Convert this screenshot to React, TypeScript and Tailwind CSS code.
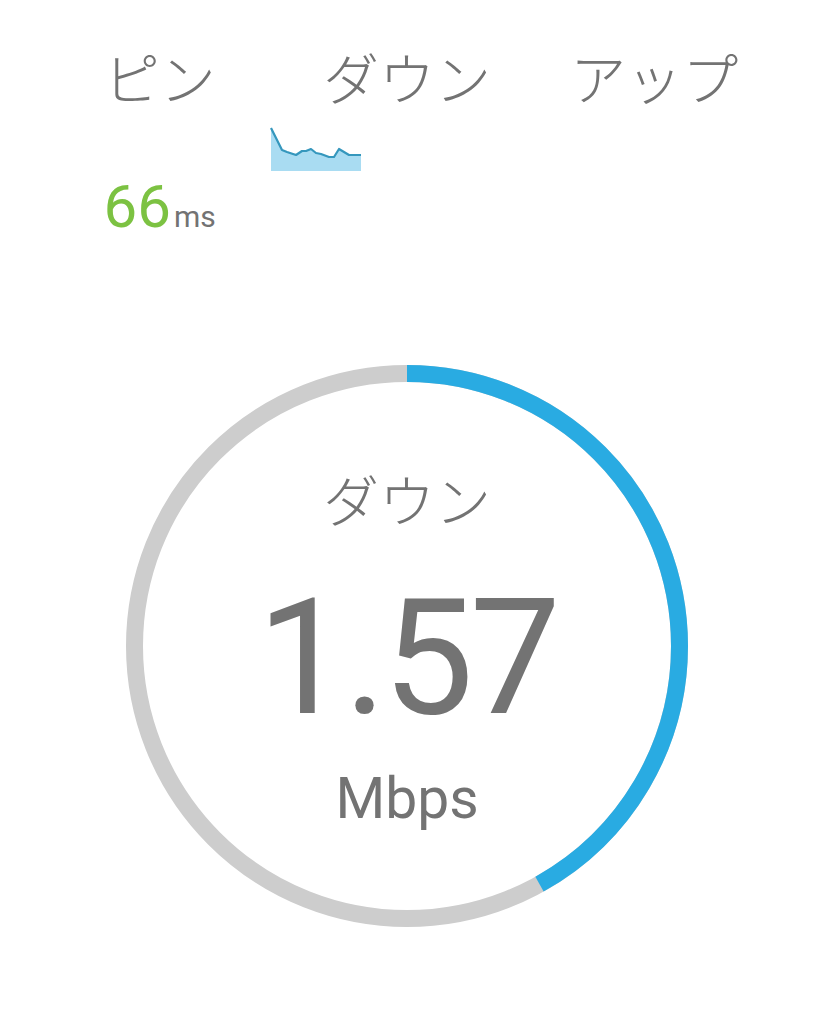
import React from 'react';

const latin = { fontFamily: 'Roboto, "Noto Sans CJK JP", sans-serif' };
const jp = { fontFamily: '"Noto Sans CJK JP", "Noto Sans", sans-serif' };

const sparkPoints = [
  [1, 3], [6, 13], [12, 25], [17, 27], [26, 30], [32, 26], [36, 26], [41, 24],
  [46, 28], [51, 29], [59, 32], [64, 32], [69, 24], [74, 27], [79, 30], [91, 30],
];

const Sparkline: React.FC = () => {
  const line = sparkPoints.map(([x, y], i) => `${i === 0 ? 'M' : 'L'}${x} ${y}`).join(' ');
  const area = `${line} L91 46 L1 46 Z`;
  return (
    <svg width="92" height="47" viewBox="0 0 92 47" className="block">
      <path d={area} fill="#a9dcf2" />
      <path d={line} fill="none" stroke="#3597bd" strokeWidth="2.2" strokeLinejoin="round" />
    </svg>
  );
};

const Gauge: React.FC<{ progress: number }> = ({ progress }) => {
  const r = 272.5;
  const c = 2 * Math.PI * r;
  return (
    <svg width="564" height="564" viewBox="0 0 564 564" className="block">
      <circle cx="282" cy="282" r={r} fill="none" stroke="#cdcdcd" strokeWidth="17" />
      <circle
        cx="282"
        cy="282"
        r={r}
        fill="none"
        stroke="#29abe2"
        strokeWidth="17"
        strokeDasharray={`${c * progress} ${c}`}
        transform="rotate(-90 282 282)"
      />
    </svg>
  );
};

export default function App() {
  return (
    <div className="w-[814px] h-[1024px] bg-white text-[#737373] overflow-hidden">
      {/* header: ping / down / up */}
      <div className="grid grid-cols-3 px-[36px] pt-[38px]">
        <div className="text-center text-[56px] font-light leading-[76px]" style={jp}>ピン</div>
        <div className="text-center text-[56px] font-light leading-[76px]" style={jp}>ダウン</div>
        <div className="text-center text-[56px] font-light leading-[76px]" style={jp}>アップ</div>

        <div />
        <div className="pt-[11px]">
          <div className="ml-[-13px]">
            <Sparkline />
          </div>
        </div>
        <div />

        <div className="flex justify-center items-baseline mt-[5px]" style={latin}>
          <span className="text-[60px] leading-[60px] text-[#7cc242]">66</span>
          <span className="text-[30px] leading-[30px] text-[#737373] ml-[3px]">ms</span>
        </div>
        <div />
        <div />
      </div>

      {/* gauge */}
      <div className="relative w-[564px] h-[564px] mx-auto mt-[127px]">
        <Gauge progress={0.419} />
        <div className="absolute inset-0 flex flex-col items-center">
          <div className="mt-[96px] text-[56px] font-light leading-[76px]" style={jp}>ダウン</div>
          <div className="mt-[32px] text-[162px] leading-[180px] tracking-[-4px]" style={latin}>1.57</div>
          <div className="mt-[16px] text-[57px] leading-[70px]" style={latin}>Mbps</div>
        </div>
      </div>
    </div>
  );
}
